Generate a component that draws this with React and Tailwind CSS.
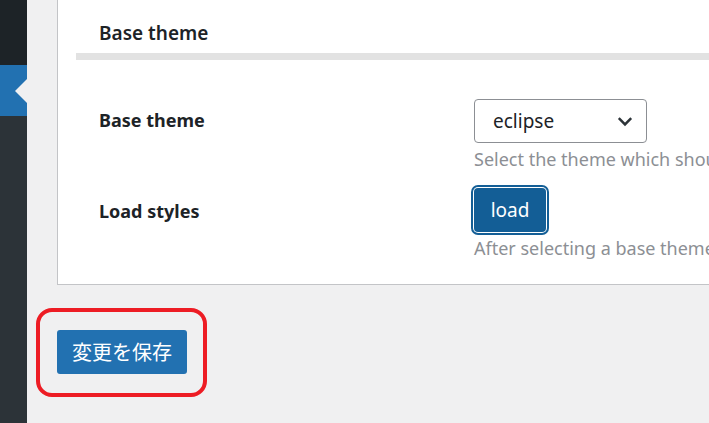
export default function App() {
  const font = { fontFamily: '"Noto Sans", "Open Sans", sans-serif' };
  return (
    <div className="flex w-[709px] h-[423px] overflow-hidden bg-[#f0f0f1]" style={font}>
      <div className="flex w-[27px] shrink-0 flex-col">
        <div className="h-[65px] bg-[#1d2327]" />
        <div className="relative h-[51px] bg-[#2271b1]">
          <div className="absolute right-0 top-[14px] h-0 w-0 border-y-[12px] border-r-[12px] border-y-transparent border-r-[#f0f0f1]" />
        </div>
        <div className="flex-1 bg-[#2c3338]" />
      </div>
      <div className="flex min-w-0 flex-1 flex-col">
        <div className="ml-[30px] h-[285px] shrink-0 overflow-hidden border-b border-l border-[#c3c4c7] bg-white pl-[18px]">
          <div className="h-[53px] pl-[23px] pt-[20px] text-[19px] font-semibold leading-[26px] text-[#1d2327]">
            Base theme
          </div>
          <div className="h-[7px] bg-[#e2e2e2]" />
          <div className="flex pl-[23px] pt-[39px]">
            <div className="w-[375px] shrink-0 pt-[8px] text-[18px] font-bold leading-[26px] text-[#1d2327]">
              Base theme
            </div>
            <div className="flex min-w-0 flex-col">
              <div className="flex h-[44px] w-[173px] items-center justify-between rounded-[4px] border border-[#8c8f94] pl-[18px] pr-[12px] text-[19px] text-[#1d2327]">
                <span>eclipse</span>
                <svg width="18" height="18" viewBox="0 0 16 16" fill="none">
                  <path d="M2.5 5.5 8 11l5.5-5.5" stroke="#2c3338" strokeWidth="2.2" />
                </svg>
              </div>
              <div className="mt-[3px] whitespace-nowrap text-[18px] leading-[26px] text-[#8c8f94]">
                Select the theme which should be used as a base.
              </div>
            </div>
          </div>
          <div className="flex pl-[23px] pt-[16px]">
            <div className="w-[375px] shrink-0 pt-[10px] text-[18px] font-bold leading-[26px] text-[#1d2327]">
              Load styles
            </div>
            <div className="flex min-w-0 flex-col">
              <button className="h-[44px] w-[72px] rounded-[4px] bg-[#135e96] text-[19px] text-white shadow-[0_0_0_1px_#fff,0_0_0_3px_#135e96]">
                load
              </button>
              <div className="mt-[3px] whitespace-nowrap text-[18px] leading-[26px] text-[#8c8f94]">
                After selecting a base theme, click load to apply its styles.
              </div>
            </div>
          </div>
        </div>
        <div className="ml-[9px] mt-[23px] w-fit rounded-[16px] border-4 border-[#ed1c24] pb-[19px] pl-[17px] pr-[16px] pt-[18px]">
          <button
            className="h-[44px] w-[130px] rounded-[3px] bg-[#2271b1] text-[20px] text-white"
            style={{ fontFamily: '"Noto Sans CJK JP", "Noto Sans", sans-serif' }}
          >
            変更を保存
          </button>
        </div>
      </div>
    </div>
  );
}
